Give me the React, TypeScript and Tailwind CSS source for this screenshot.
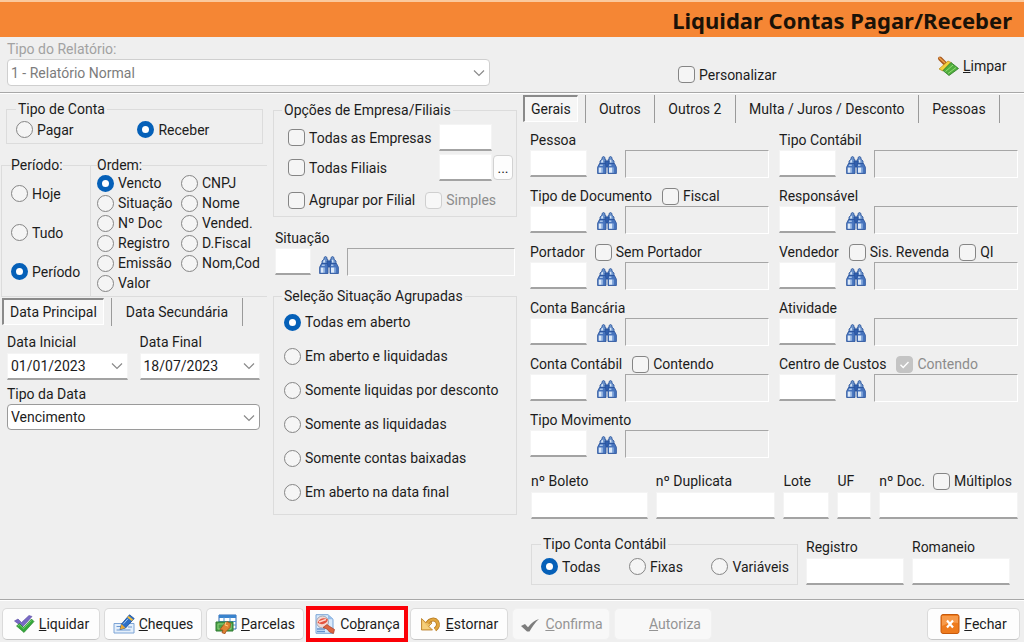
import { useId, type ReactNode } from "react";

const boxClass = "m-0 size-[17px] shrink-0 appearance-none border";
const idleBox = "border-[#858585] bg-[#f5f5f5]";
const disabledBox = "border-[#cfcfcf] bg-[#f7f7f7] checked:border-[#c4c4c4] checked:bg-[#c4c4c4]";

function Check({ label, disabled, checked }: { label: ReactNode; disabled?: boolean; checked?: boolean }) {
  return (
    <label className={disabled ? "flex items-center gap-1 text-[#8c8c8c]" : "flex items-center gap-1"}>
      <span className="relative flex">
        <input
          type="checkbox"
          disabled={disabled}
          defaultChecked={checked}
          className={`${boxClass} rounded-sm ${disabled ? disabledBox : idleBox}`}
        />
        {checked && (
          <svg viewBox="0 0 17 17" className="absolute inset-0 size-[17px]" fill="none" stroke="#fff" strokeWidth="1.4">
            <path d="M4.5 8.8l2.7 2.7 5.3-5.6" />
          </svg>
        )}
      </span>
      <span className="whitespace-nowrap">{label}</span>
    </label>
  );
}

function Radio({ name, label, checked }: { name: string; label: string; checked?: boolean }) {
  return (
    <label className="flex items-center gap-1">
      <input
        type="radio"
        name={name}
        defaultChecked={checked}
        className={`${boxClass} ${idleBox} rounded-full checked:border-[5px] checked:border-[#0560b8] checked:bg-white`}
      />
      <span className="whitespace-nowrap">{label}</span>
    </label>
  );
}

const inputClass =
  "h-[27px] min-w-0 border border-[#f4f4f4] border-b-2 border-b-[#a3a3a3] bg-white px-1 outline-none";
const readClass =
  "h-7 min-w-0 flex-1 border border-b-white border-l-[#a6a6a6] border-r-white border-t-[#a6a6a6] bg-[#efefef] outline-none";

function Binoculars() {
  return (
    <svg viewBox="0 0 20 18" className="h-[18px] w-5">
      <g stroke="#27509a" strokeWidth=".8">
        <path d="M5 1.5 6.5.5 8 1.5v2.2h1V8H3V5l2-1.8zM12 1.5l1.5-1 1.5 1v1.7L17 5v3h-6V3.7h1z" fill="#6d94cc" />
        <path d="M8 5h4v6H8z" fill="#315fae" />
        <path d="M2.5 7.5h6l.5 3v7H.6v-6.3zM11.5 7.5h6l1.9 3.7v6.3H11v-7z" fill="#4774bd" />
      </g>
      <path d="M1.7 11.5h3v5.2h-3zM12 11.5h3.3v5.2H12z" fill="#dbe8f8" />
      <path d="M4.7 11.5h1.4v5.2H4.7zM15.3 11.5h1.4v5.2h-1.4z" fill="#8db0e0" />
      <path d="M4.5 4.6 6 3.8v2.6H4zM13 3.4l1.4.8v2.2H13z" fill="#d3e2f5" />
      <path d="M3.2 8.4h2.6v1.7H2.6zM12 8.4h2.4v1.7H12z" fill="#a7c3e8" />
    </svg>
  );
}

function Lookup({ label, children, narrow }: { label: string; children?: ReactNode; narrow?: boolean }) {
  const id = useId();
  return (
    <div className="min-w-0">
      <div className="flex h-5 items-center gap-2.5">
        <label htmlFor={id} className="whitespace-nowrap">{label}</label>
        {children}
      </div>
      <div className="flex items-start">
        <input id={id} className={narrow ? `${inputClass} w-9 shrink-0` : `${inputClass} w-[57px] shrink-0`} />
        <button type="button" aria-label={`Buscar ${label}`} className={narrow ? "mx-2 mt-2 shrink-0" : "mx-2 mt-1.5 shrink-0 pl-0.5"}>
          <Binoculars />
        </button>
        <input readOnly aria-label={`${label} descrição`} className={readClass} />
      </div>
    </div>
  );
}

function TextField({ label, children }: { label: string; children?: ReactNode }) {
  const id = useId();
  return (
    <div className="min-w-0">
      <div className="flex h-[22px] items-center gap-2 whitespace-nowrap">
        <label htmlFor={id}>{label}</label>
        {children}
      </div>
      <input id={id} className={`${inputClass} w-full`} />
    </div>
  );
}

function Chevron() {
  return (
    <svg viewBox="0 0 12 8" className="h-2 w-3" fill="none" stroke="#8a8a8a" strokeWidth="1.2">
      <path d="M1 1.5l5 5 5-5" />
    </svg>
  );
}

function DateField({ label, value }: { label: string; value: string }) {
  const id = useId();
  return (
    <div className="min-w-0">
      <label htmlFor={id} className="flex h-5 items-center">{label}</label>
      <div className="mt-px flex h-[27px] items-center border border-b-2 border-[#f4f4f4] border-b-[#a3a3a3] bg-white pr-1">
        <input id={id} defaultValue={value} className="w-full min-w-0 bg-transparent pl-[3px] outline-none" />
        <button type="button" aria-label={`Abrir calendário ${label}`}><Chevron /></button>
      </div>
    </div>
  );
}

function Tab({ children, active }: { children: ReactNode; active?: boolean }) {
  return active ? (
    <div className="border-r border-[#9a9a9a] pr-[7px]">
      <button
        type="button"
        role="tab"
        aria-selected="true"
        className="h-[27px] whitespace-nowrap border-2 border-b border-r border-[#8a8a8a] border-b-white border-r-white bg-[#f6f6f6] px-1.5"
      >
        {children}
      </button>
    </div>
  ) : (
    <button type="button" role="tab" aria-selected="false" className="h-7 grow whitespace-nowrap border-r border-[#9a9a9a]">
      {children}
    </button>
  );
}

function Action({ icon, children, disabled, narrow }: { icon?: ReactNode; children: ReactNode; disabled?: boolean; narrow?: boolean }) {
  return (
    <button
      type="button"
      disabled={disabled}
      className={`${narrow ? "w-[93px]" : "w-[98px]"} flex h-8 items-center justify-center gap-1 whitespace-nowrap rounded-[5px] border border-[#dadada] border-b-[#c6c6c6] bg-[#fdfdfd] disabled:border-[#f1f1f1] disabled:bg-[#f8f8f8] disabled:text-[#949494]`}
    >
      {icon}
      <span>{children}</span>
    </button>
  );
}

const icon = "h-5 w-[22px] shrink-0";

const LiquidarIcon = () => (
  <svg viewBox="0 0 22 20" className={icon}>
    <path d="M1.5 7 5 5l3.500 3.500L16 1.500l3 1L9.500 13z" fill="#7869c4" stroke="#5548a0" strokeWidth=".6" />
    <path d="M3.500 12l3-2.500 4 4L18.500 5 21 7.500 11 18.500z" fill="#35a83a" stroke="#217c28" strokeWidth=".6" />
    <path d="M5 12l1.500-1.200 4 3.800 8-8.300" fill="none" stroke="#82dc7c" strokeWidth=".8" />
  </svg>
);
const ChequesIcon = () => (
  <svg viewBox="0 0 22 20" className={icon}>
    <path d="M1 9.500h20v9.500H1z" fill="#e4effb" stroke="#7da4d6" />
    <path d="M3.500 12.500h5M3.500 16h14M15 13h4" stroke="#6a97d2" strokeWidth="1.2" />
    <path d="M7 15.500l1.500-5.500L16.500.8l4.700 3.700-8.700 9.500z" fill="#2d6fc6" stroke="#194c94" strokeWidth=".8" />
    <path d="M14.300 3.400l4.500 3.700 1.300-1.500-4.400-3.700z" fill="#f5bd38" />
    <path d="M7 15.500l1.500-5.500 4 3.900z" fill="#e9a832" />
    <path d="M10.500 9.800l4.500-5" stroke="#a2c9f3" />
  </svg>
);
const ParcelasIcon = () => (
  <svg viewBox="0 0 22 20" className={icon}>
    <path d="M4 1h17v14H4z" fill="#fff" stroke="#2c69b2" />
    <path d="M4 1h17v3H4z" fill="#3983cd" />
    <path d="M4 7.5h17M4 11h17M9 3v12M15 3v12" stroke="#5094d4" />
    <path d="M1 8h17v9H1z" fill="#4ba348" stroke="#2d7830" />
    <path d="M3 10h13v5H3z" fill="none" stroke="#90cf7a" />
    <path d="M5 15.500l3-4 4-4 3.500 2-.5 4-4 4-1 2.200-3-1 1-2.500z" fill="#df8433" stroke="#a34c1b" strokeWidth=".8" />
    <path d="M11 8l-1 3 3 1" fill="none" stroke="#ffce7a" />
  </svg>
);
const CobrancaIcon = () => (
  <svg viewBox="0 0 22 20" className={icon}>
    <path d="M2 .7h12l5 4.500v14.100H2z" fill="#d9e9fb" stroke="#79a3d6" />
    <path d="M14 .7v4.500h5z" fill="#95bde9" />
    <path d="M3 15h8M3 17.500h8" stroke="#6593cd" strokeWidth="1.300" />
    <circle cx="8.500" cy="8" r="6" fill="#f5d6cf" stroke="#9ba7b8" />
    <path d="M3.500 8.500C6 4 10 3 14 5.500c-1 4-6 6.500-10.500 3z" fill="#e45340" />
    <path d="M5 8l7-2.500" stroke="#ffd8cf" strokeWidth="1.500" />
    <path d="M9 13.500l4-3 2 1.500 5.500 3.500-1 4-4-1.500L13 15z" fill="#dc6540" stroke="#a83a25" strokeWidth=".7" />
  </svg>
);
const EstornarIcon = () => (
  <svg viewBox="0 0 22 20" className={icon}>
    <path d="M1.500 4.500v11.500h11l-3.800-3.800L12 9 8.500 6 6 8.800z" fill="#eec065" stroke="#b77a20" strokeWidth=".8" />
    <path d="M7.500 9C10 5 15 4.500 17 7.500s.8 6-2 8" fill="none" stroke="#b77a20" strokeWidth="4" />
    <path d="M7.500 9C10 5 15 4.500 17 7.500s.8 6-2 8" fill="none" stroke="#e0a63f" strokeWidth="2.500" />
    <path d="M2.500 7v8h7.500z" fill="#f5cf7c" />
  </svg>
);
const ConfirmaIcon = () => (
  <svg viewBox="0 0 22 20" className={icon}>
    <path d="M2 12l4-2 3 3.200C12.500 9 15.500 6.500 20 5c-4 3.500-7 8-9.500 12.500H8z" fill="#7d7d7d" />
  </svg>
);
const FecharIcon = () => (
  <svg viewBox="0 0 20 20" className="size-5 shrink-0">
    <rect x="1" y=".5" width="18" height="19" rx="2" fill="#ee7b1d" stroke="#c75a0c" />
    <path d="M2 2h16v7C12 8 7 9 2 12z" fill="#f79a4a" />
    <path d="M7 6.500l6 7M13 6.500l-6 7" stroke="#fff" strokeWidth="2.200" />
  </svg>
);
const LimparIcon = () => (
  <svg viewBox="0 0 24 22" className="h-[22px] w-6">
    <path d="M4 3.500l5.500 5.500" stroke="#a8591c" strokeWidth="4" strokeLinecap="round" />
    <path d="M3.500 3l5 4.500" stroke="#eda04c" strokeWidth="1.500" strokeLinecap="round" />
    <path d="M3 14l9-8 3 1.500-8 8.500z" fill="#f2cf3c" stroke="#b88a18" strokeWidth=".7" />
    <path d="M7 15.500l8-8 7.500 6-9.500 7z" fill="#4fae3c" stroke="#2c7a26" strokeWidth=".8" />
    <path d="M9.500 16.500l7.500-6.500M12 18.500l8-6" stroke="#95dc76" />
  </svg>
);

const group = "min-w-0 border border-[#dcdcdc]";

export default function App() {
  return (
    <div className="flex min-h-screen flex-col bg-[#efefef] font-['Roboto','Liberation_Sans',sans-serif] text-[14px] leading-4 text-[#1c1c1c]">
      <header className="flex h-[37px] items-center justify-end border-t-2 border-[#fbc99d] bg-[#f58634] pr-3">
        <h1 className="font-['Noto_Sans','DejaVu_Sans',sans-serif] text-[22px] font-bold leading-6 text-[#1a1208]">
          Liquidar Contas Pagar/Receber
        </h1>
      </header>

      <section className="grid h-[55px] grid-cols-[483fr_188fr_258fr_88fr] pl-[7px] pt-0.5">
        <div>
          <label htmlFor="relatorio" className="flex h-5 items-center text-[#a2a2a2]">Tipo do Relatório:</label>
          <div className="relative">
            <select
              id="relatorio"
              disabled
              className="h-[27px] w-full appearance-none rounded-sm border border-[#cfcfcf] bg-white px-[3px] text-[#7c7c7c] opacity-100"
            >
              <option>1 - Relatório Normal</option>
            </select>
            <span className="pointer-events-none absolute right-[5px] top-2.5"><Chevron /></span>
          </div>
        </div>
        <div />
        <div className="flex items-end pb-[9px]">
          <Check label="Personalizar" />
        </div>
        <button type="button" className="flex items-center gap-[3px] self-center">
          <LimparIcon />
          <span><u>L</u>impar</span>
        </button>
      </section>

      <main className="grid grow grid-cols-[267fr_250fr_507fr] border-t border-[#a8a8a8] shadow-[inset_0_1px_0_#fff]">
        <div className="min-w-0 pt-2">
          <fieldset className={`${group} ml-1.5 mr-1 grid grid-cols-[122fr_116fr] px-[9px] pb-[5px] pt-1`}>
            <legend className="px-0.5">Tipo de Conta</legend>
            <Radio name="conta" label="Pagar" />
            <Radio name="conta" label="Receber" checked />
          </fieldset>

          <div className="mt-[13px] grid grid-cols-[90fr_177fr]">
            <fieldset className={`${group} ml-px border-r-0 pl-[9px]`}>
              <legend>Período:</legend>
              <div className="grid auto-rows-[39px] pt-px">
                <Radio name="periodo" label="Hoje" />
                <Radio name="periodo" label="Tudo" />
                <Radio name="periodo" label="Período" checked />
              </div>
            </fieldset>
            <fieldset className={`${group} border-r-0 pb-[3px] pl-1.5`}>
              <legend>Ordem:</legend>
              <div className="grid grid-flow-col grid-cols-[84fr_86fr] grid-rows-[repeat(6,20px)]">
                <Radio name="ordem" label="Vencto" checked />
                <Radio name="ordem" label="Situação" />
                <Radio name="ordem" label="Nº Doc" />
                <Radio name="ordem" label="Registro" />
                <Radio name="ordem" label="Emissão" />
                <Radio name="ordem" label="Valor" />
                <Radio name="ordem" label="CNPJ" />
                <Radio name="ordem" label="Nome" />
                <Radio name="ordem" label="Vended." />
                <Radio name="ordem" label="D.Fiscal" />
                <Radio name="ordem" label="Nom,Cod" />
              </div>
            </fieldset>
          </div>

          <div role="tablist" className="ml-0.5 mr-6 mt-px flex">
            <Tab active>Data Principal</Tab>
            <Tab>Data Secundária</Tab>
          </div>
          <div className="mx-[7px] mt-1.5">
            <div className="grid grid-cols-2 gap-3">
              <DateField label="Data Inicial" value="01/01/2023" />
              <DateField label="Data Final" value="18/07/2023" />
            </div>
            <label htmlFor="tipo-data" className="mt-1 flex h-5 items-center">Tipo da Data</label>
            <div className="relative">
              <select id="tipo-data" className="h-[26px] w-full appearance-none rounded-sm border border-[#9a9a9a] bg-white px-[3px]">
                <option>Vencimento</option>
              </select>
              <span className="pointer-events-none absolute right-[5px] top-2.5"><Chevron /></span>
            </div>
          </div>
        </div>

        <div className="min-w-0 pl-1.5 pt-[9px]">
          <fieldset className={`${group} pb-[7px] pl-3.5 pr-[3px] pt-1.5`}>
            <legend className="-ml-1.5 px-0.5">Opções de Empresa/Filiais</legend>
            <div className="flex h-[27px] items-center justify-between pr-[21px]">
              <Check label="Todas as Empresas" />
              <input aria-label="Empresa" className={`${inputClass} w-[53px]`} />
            </div>
            <div className="mt-[3px] flex h-[27px] items-center">
              <Check label="Todas Filiais" />
              <input aria-label="Filial" className={`${inputClass} ml-auto w-[53px]`} />
              <button type="button" aria-label="Buscar filial" className="ml-px h-[25px] w-5 rounded-sm border border-[#d2d2d2] bg-[#fdfdfd]">...</button>
            </div>
            <div className="mt-2.5 flex h-[18px] items-center gap-2.5">
              <Check label="Agrupar por Filial" />
              <Check label="Simples" disabled />
            </div>
          </fieldset>

          <div className="mx-0.5 mt-[11px]">
            <Lookup label="Situação" narrow />
          </div>

          <fieldset className={`${group} mt-3 pb-[5px] pl-2.5`}>
            <legend className="-ml-0.5 px-0.5">Seleção Situação Agrupadas</legend>
            <div className="grid auto-rows-[34px] pt-px">
              <Radio name="selecao" label="Todas em aberto" checked />
              <Radio name="selecao" label="Em aberto e liquidadas" />
              <Radio name="selecao" label="Somente liquidas por desconto" />
              <Radio name="selecao" label="Somente as liquidadas" />
              <Radio name="selecao" label="Somente contas baixadas" />
              <Radio name="selecao" label="Em aberto na data final" />
            </div>
          </fieldset>
        </div>

        <div className="min-w-0 pl-1.5 pt-0.5">
          <div role="tablist" className="mr-6 flex">
            <Tab active>Gerais</Tab>
            <Tab>Outros</Tab>
            <Tab>Outros 2</Tab>
            <Tab>Multa / Juros / Desconto</Tab>
            <Tab>Pessoas</Tab>
          </div>

          <div className="ml-[7px] mr-1.5 mt-[7px] grid grid-flow-col grid-cols-2 grid-rows-6 gap-x-2.5 gap-y-2">
            <Lookup label="Pessoa" />
            <Lookup label="Tipo de Documento"><Check label="Fiscal" /></Lookup>
            <Lookup label="Portador"><Check label="Sem Portador" /></Lookup>
            <Lookup label="Conta Bancária" />
            <Lookup label="Conta Contábil"><Check label="Contendo" /></Lookup>
            <Lookup label="Tipo Movimento" />
            <Lookup label="Tipo Contábil" />
            <Lookup label="Responsável" />
            <Lookup label="Vendedor">
              <Check label="Sis. Revenda" />
              <Check label="QI" />
            </Lookup>
            <Lookup label="Atividade" />
            <Lookup label="Centro de Custos"><Check label="Contendo" disabled checked /></Lookup>
          </div>

          <div className="ml-2 mr-1.5 mt-3 grid grid-cols-[117fr_120fr_46fr_34fr_139fr] gap-x-2">
            <TextField label="nº Boleto" />
            <TextField label="nº Duplicata" />
            <TextField label="Lote" />
            <TextField label="UF" />
            <TextField label="nº Doc."><Check label="Múltiplos" /></TextField>
          </div>

          <div className="ml-2 mr-3.5 mt-[17px] grid grid-cols-[267fr_98fr_98fr] gap-x-2">
            <fieldset className={`${group} pb-0.5 pl-[9px] pr-2 pt-1.5`}>
              <legend className="px-0.5">Tipo Conta Contábil</legend>
              <div className="flex w-full justify-between">
                <Radio name="contabil" label="Todas" checked />
                <Radio name="contabil" label="Fixas" />
                <Radio name="contabil" label="Variáveis" />
              </div>
            </fieldset>
            <TextField label="Registro" />
            <TextField label="Romaneio" />
          </div>
        </div>
      </main>

      <footer className="flex h-[43px] items-center gap-1 border-t border-[#a8a8a8] pl-0.5 pr-1 pt-1.5 shadow-[inset_0_1px_0_#fff]">
        <Action icon={<LiquidarIcon />}><u>L</u>iquidar</Action>
        <Action icon={<ChequesIcon />}><u>C</u>heques</Action>
        <Action icon={<ParcelasIcon />}><u>P</u>arcelas</Action>
        <div className="outline-4 -outline-offset-2 outline-[#fb0007]">
          <Action icon={<CobrancaIcon />}>Co<u>b</u>rança</Action>
        </div>
        <Action icon={<EstornarIcon />}><u>E</u>stornar</Action>
        <Action icon={<ConfirmaIcon />} disabled><u>C</u>onfirma</Action>
        <Action icon={<span className="w-5" />} disabled><u>A</u>utoriza</Action>
        <div className="ml-auto">
          <Action narrow icon={<FecharIcon />}><u>F</u>echar</Action>
        </div>
      </footer>
    </div>
  );
}
